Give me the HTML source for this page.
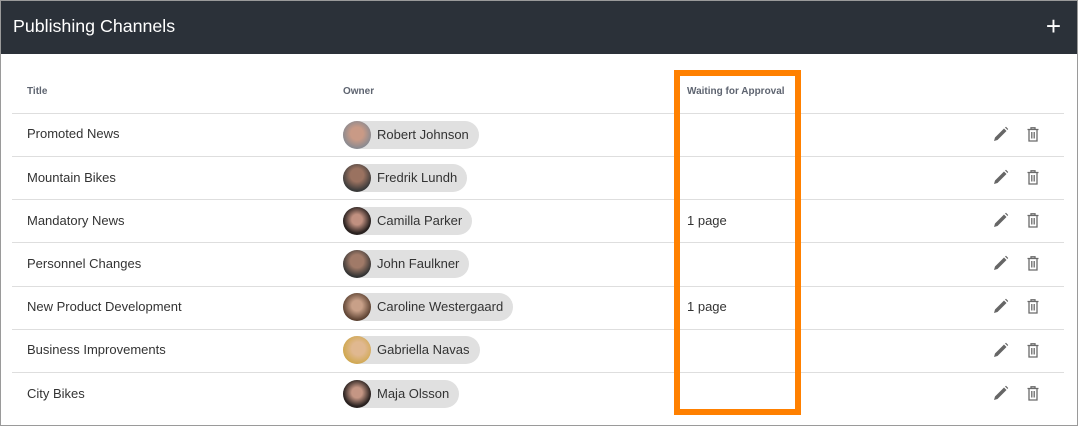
<!DOCTYPE html>
<html><head><style>
*{margin:0;padding:0;box-sizing:border-box}
body{width:1078px;height:426px;background:#fff;font-family:"Liberation Sans",sans-serif;position:relative;overflow:hidden}
.frame{position:absolute;left:0;top:0;width:1078px;height:426px;border:1px solid #9a9a9a}
.hdr{position:absolute;left:1px;top:1px;width:1076px;height:53px;background:#2b3139;color:#fff;font-size:17.8px;line-height:50px;padding-left:12px}
.plus{position:absolute;right:16px;top:0;font-size:26px;line-height:50px}
.th{position:absolute;top:86px;font-size:10px;font-weight:bold;color:#5e6470}
.line{position:absolute;left:12px;width:1052px;height:1px;background:#dedede}
.cell{position:absolute;font-size:13px;color:#333}
.chip{position:absolute;left:343px;height:28px;background:#e0e0e0;border-radius:14px;font-size:13px;color:#333;line-height:28px;padding:0 10px 0 34px}
.av{position:absolute;left:0;top:0;width:28px;height:28px;border-radius:50%}
.box{position:absolute;left:674px;top:70px;width:127px;height:345px;border:6px solid #ff8000}
svg{position:absolute}
</style></head><body>
<div class="frame"></div>
<div class="hdr">Publishing Channels<span class="plus">+</span></div>
<div class="th" style="left:27px">Title</div>
<div class="th" style="left:343px">Owner</div>
<div class="th" style="left:687px">Waiting for Approval</div>
<div class="line" style="top:113px"></div>
<div class="line" style="top:156px"></div>
<div class="line" style="top:199px"></div>
<div class="line" style="top:242px"></div>
<div class="line" style="top:286px"></div>
<div class="line" style="top:329px"></div>
<div class="line" style="top:372px"></div>

<div class="cell" style="left:27px;top:126px">Promoted News</div>
<div class="chip" style="top:121px"><span class="av" style="background:radial-gradient(circle at 50% 45%,#c99a86 30%,#8a8a90 70%)"></span>Robert Johnson</div>
<div class="cell" style="left:27px;top:170px">Mountain Bikes</div>
<div class="chip" style="top:164px"><span class="av" style="background:radial-gradient(circle at 50% 40%,#9a7260 30%,#3a3a3a 70%)"></span>Fredrik Lundh</div>
<div class="cell" style="left:27px;top:213px">Mandatory News</div>
<div class="chip" style="top:207px"><span class="av" style="background:radial-gradient(circle at 50% 45%,#c09080 25%,#2a2220 65%)"></span>Camilla Parker</div>
<div class="cell" style="left:687px;top:213px">1 page</div>
<div class="cell" style="left:27px;top:256px">Personnel Changes</div>
<div class="chip" style="top:250px"><span class="av" style="background:radial-gradient(circle at 50% 40%,#a07a68 30%,#333 70%)"></span>John Faulkner</div>
<div class="cell" style="left:27px;top:299px">New Product Development</div>
<div class="chip" style="top:293px"><span class="av" style="background:radial-gradient(circle at 50% 45%,#c8a088 25%,#5a4030 70%)"></span>Caroline Westergaard</div>
<div class="cell" style="left:687px;top:299px">1 page</div>
<div class="cell" style="left:27px;top:342px">Business Improvements</div>
<div class="chip" style="top:336px"><span class="av" style="background:radial-gradient(circle at 55% 45%,#e0b890 30%,#d0a850 70%)"></span>Gabriella Navas</div>
<div class="cell" style="left:27px;top:386px">City Bikes</div>
<div class="chip" style="top:380px"><span class="av" style="background:radial-gradient(circle at 50% 45%,#c49684 25%,#2a2220 65%)"></span>Maja Olsson</div>

<div class="box"></div>

<svg width="0" height="0"><defs>
<g id="pen"><path d="M1 15 L2 11.5 L11 2.5 L13.5 5 L4.5 14 Z" fill="#666"/><path d="M12 1.5 L13 0.8 L15.2 3 L14.5 4Z" fill="#666"/></g>
<g id="bin" fill="none" stroke="#6a6a6a" stroke-width="1.3"><path d="M2.5 3.5 H13.5 M6 3.5 V1.8 H10 V3.5 M4 3.5 V15 H12 V3.5 M6.8 6 V12.5 M9.2 6 V12.5"/></g>
</defs></svg>
<svg width="16" height="16" style="left:993px;top:126px"><use href="#pen"/></svg><svg width="16" height="16" style="left:1025px;top:126px"><use href="#bin"/></svg>
<svg width="16" height="16" style="left:993px;top:169px"><use href="#pen"/></svg><svg width="16" height="16" style="left:1025px;top:169px"><use href="#bin"/></svg>
<svg width="16" height="16" style="left:993px;top:212px"><use href="#pen"/></svg><svg width="16" height="16" style="left:1025px;top:212px"><use href="#bin"/></svg>
<svg width="16" height="16" style="left:993px;top:255px"><use href="#pen"/></svg><svg width="16" height="16" style="left:1025px;top:255px"><use href="#bin"/></svg>
<svg width="16" height="16" style="left:993px;top:298px"><use href="#pen"/></svg><svg width="16" height="16" style="left:1025px;top:298px"><use href="#bin"/></svg>
<svg width="16" height="16" style="left:993px;top:342px"><use href="#pen"/></svg><svg width="16" height="16" style="left:1025px;top:342px"><use href="#bin"/></svg>
<svg width="16" height="16" style="left:993px;top:385px"><use href="#pen"/></svg><svg width="16" height="16" style="left:1025px;top:385px"><use href="#bin"/></svg>
</body></html>
